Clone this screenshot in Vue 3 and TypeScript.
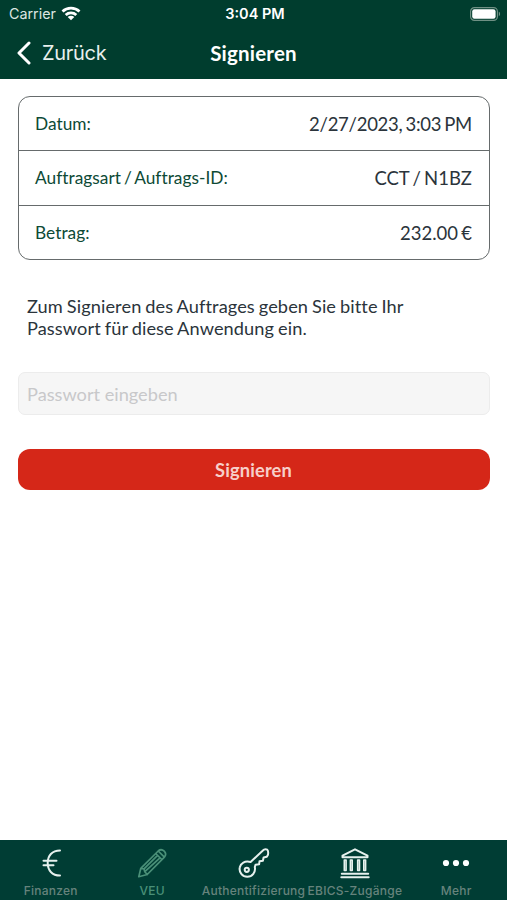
<script setup lang="ts">
import { ref } from 'vue'

interface Detail {
  id: string
  label: string
  value: string
}

interface Tab {
  id: string
  label: string
  active?: boolean
}

const details: Detail[] = [
  { id: 'date', label: 'Datum:', value: '2/27/2023, 3:03 PM' },
  { id: 'order', label: 'Auftragsart / Auftrags-ID:', value: 'CCT / N1BZ' },
  { id: 'amount', label: 'Betrag:', value: '232.00 €' },
]

const tabs: Tab[] = [
  { id: 'finance', label: 'Finanzen' },
  { id: 'veu', label: 'VEU', active: true },
  { id: 'auth', label: 'Authentifizierung' },
  { id: 'ebics', label: 'EBICS-Zugänge' },
  { id: 'more', label: 'Mehr' },
]

const password = ref('')
</script>

<template>
  <div class="screen">
    <header class="header">
      <div class="status">
        <div class="carrier">
          <span>Carrier</span>
          <svg class="wifi" width="20" height="15" viewBox="0 0 20 15" fill="none" stroke="#fff" stroke-width="2.8">
            <path d="M1.500 5.400C6.300.9 13.700.9 18.500 5.400" />
            <path d="M4.700 8.900c3-2.800 7.600-2.800 10.600 0" />
            <path d="M10 14.300 6.700 11c1.900-1.600 4.700-1.600 6.600 0z" fill="#fff" stroke="none" />
          </svg>
        </div>
        <span class="clock">3:04 PM</span>
        <svg class="battery" width="31" height="14" viewBox="0 0 31 14">
          <rect x=".6" y=".6" width="26.800" height="12.800" rx="3.800" fill="none" stroke="#6f9084" stroke-width="1.200" />
          <rect x="2.200" y="2.200" width="23.400" height="9.600" rx="2.200" fill="#fff" />
          <path d="M28.800 4.800c1.700.5 1.700 3.900 0 4.400z" fill="#6f9084" />
        </svg>
      </div>
      <nav class="navbar">
        <button class="back" type="button">
          <svg width="14" height="24" viewBox="0 0 14 24" fill="none" stroke="#fff" stroke-width="3" stroke-linecap="round" stroke-linejoin="round">
            <path d="M12 2 2 12l10 10" />
          </svg>
          <span>Zurück</span>
        </button>
        <h1 class="title">Signieren</h1>
      </nav>
    </header>

    <main class="content">
      <dl class="details">
        <div v-for="row in details" :key="row.id" class="row" :class="row.id">
          <dt>{{ row.label }}</dt>
          <dd>{{ row.value }}</dd>
        </div>
      </dl>
      <p class="hint">Zum Signieren des Auftrages geben Sie bitte Ihr<br />Passwort für diese Anwendung ein.</p>
      <input v-model="password" class="password" type="password" placeholder="Passwort eingeben" />
      <button class="submit" type="button">Signieren</button>
    </main>

    <footer class="tabs">
      <div v-for="tab in tabs" :key="tab.id" class="tab" :class="[tab.id, { active: tab.active }]">
        <svg class="icon" width="34" height="34" viewBox="0 0 34 34" fill="none" stroke="currentColor" stroke-width="2" stroke-linecap="round" stroke-linejoin="round">
          <template v-if="tab.id === 'finance'">
            <path d="M26 4.500C18 4.500 13.700 9.800 13.700 17S18 29.500 26 29.500M9.500 14.800h13M9.500 19.300h10" />
          </template>
          <g v-else-if="tab.id === 'veu'" stroke-width="1.700">
            <path d="M3.800 30.700 5.800 22.300 23.200 5q3-2.600 6 .2 2.800 2.900.2 6L12.200 28.500zM5.800 22.300l3.200.6.800 2.800 2.400 2.800M20.700 7.500l6.200 6.200M23.200 5l6.200 6.200M9 22.900 22.600 9.400M9.800 25.700 25 11.800" />
          </g>
          <template v-else-if="tab.id === 'auth'">
            <path d="M14.600 16 26.600 4.700q2.100-2.200 4.600-1.100Q32.600 5 32 8.700l-1.200 2-3.200.8-.7 3.200-3.400.6-.4 3-3.500.4-.8 2.300c1.100 5.200-2.500 9.700-7.500 9.700a7.700 7.700 0 0 1-7.500-9.400c.8-4.200 5-6.800 10.800-5.300z" />
            <circle cx="10.800" cy="23.800" r="2.100" />
          </template>
          <template v-else-if="tab.id === 'ebics'">
            <path d="m17 3.300 12.500 6.400v1.500h-25V9.700zM3.800 27.800h26.400M3.300 31.300h27.400" />
            <path d="M6.300 14v10.500h1.800V14zM12.400 14v10.500h1.800V14zM19.700 14v10.500h1.800V14zM25.800 14v10.500h1.800V14z" stroke-width="1.600" />
          </template>
          <g v-else fill="currentColor" stroke="none">
            <circle cx="7" cy="17" r="3.100" />
            <circle cx="17" cy="17" r="3.100" />
            <circle cx="27" cy="17" r="3.100" />
          </g>
        </svg>
        <span class="tab-label">{{ tab.label }}</span>
      </div>
    </footer>
  </div>
</template>

<style>
body {
  margin: 0;
}
</style>

<style scoped>
.screen {
  width: 507px;
  height: 900px;
  display: flex;
  flex-direction: column;
  background: #fff;
  font-family: Lato, sans-serif;
  overflow: hidden;
}
.header {
  height: 79px;
  flex: none;
  background: #003d2e;
  color: #fff;
  font-family: Inter, sans-serif;
}
.status {
  height: 27px;
  display: grid;
  grid-template-columns: 1fr auto 1fr;
  align-items: center;
  padding: 0 6px 0 9px;
}
.carrier {
  display: flex;
  align-items: center;
  gap: 5px;
  font-size: 14.300px;
  color: #dce6e2;
}
.clock {
  font-size: 14.500px;
  font-weight: 600;
}
.battery {
  justify-self: end;
}
.navbar {
  height: 51px;
  display: grid;
  grid-template-columns: 1fr auto 1fr;
  align-items: center;
  padding: 0 17px;
}
.back {
  display: flex;
  align-items: center;
  gap: 11px;
  padding: 0;
  border: 0;
  background: none;
  color: #e8f0ed;
  font: 400 20px/24px Inter, sans-serif;
  letter-spacing: -0.3px;
}
.title {
  margin: 0;
  font: 700 20.500px/24px Lato, sans-serif;
  letter-spacing: 0.2px;
}
.content {
  flex: 1;
  display: flex;
  flex-direction: column;
  padding: 17px 17px 0 18px;
}
.details {
  margin: 0;
  box-sizing: border-box;
  height: 164px;
  display: grid;
  grid-template-rows: 53px 55px 1fr;
  border: 1px solid #666b6c;
  border-radius: 12px;
}
.row {
  display: flex;
  align-items: center;
  justify-content: space-between;
  padding: 0 17px 0 16px;
}
.row + .row {
  border-top: 1px solid #666b6c;
}
dt {
  font-size: 17.300px;
  word-spacing: -1.500px;
  letter-spacing: 0.030px;
  line-height: 22px;
  color: #0d4a36;
}
dd {
  margin: 0;
  font-size: 18.500px;
  word-spacing: -1.500px;
  color: #2b343b;
}
.date dd {
  letter-spacing: -0.260px;
}
.hint {
  margin: 35px 9px 0;
  font-size: 18.200px;
  line-height: 22px;
  letter-spacing: 0.090px;
  word-spacing: -0.800px;
  color: #2b343b;
}
.password {
  box-sizing: border-box;
  width: 100%;
  height: 43px;
  margin: 33px 0 0;
  padding: 0 8px;
  border: 1px solid #ececec;
  border-radius: 7px;
  background: #f6f6f6;
  font: 400 18.200px Lato, sans-serif;
}
.password::placeholder {
  color: #c8c8ca;
  opacity: 1;
}
.submit {
  height: 41px;
  margin: 34px 0 0;
  padding: 0 1px 0 0;
  border: 0;
  border-radius: 12px;
  background: #d52718;
  color: #f7cfca;
  font: 700 18.300px Lato, sans-serif;
  letter-spacing: 0.150px;
}
.tabs {
  height: 60px;
  flex: none;
  display: grid;
  grid-template-columns: repeat(5, 1fr);
  background: #003d34;
  color: #e6f1ee;
  font-family: Inter, sans-serif;
}
.tab {
  display: flex;
  flex-direction: column;
  align-items: center;
  padding-top: 6px;
  min-width: 0;
}
.active {
  color: #4a9078;
}
.more {
  color: #fff;
}
.icon {
  flex: none;
}
.tab-label {
  margin-top: 3px;
  font-size: 12px;
  line-height: 16px;
  font-weight: 500;
  letter-spacing: 0.250px;
  white-space: nowrap;
  color: #66837c;
}
.active .tab-label {
  color: #4a9078;
}
</style>
